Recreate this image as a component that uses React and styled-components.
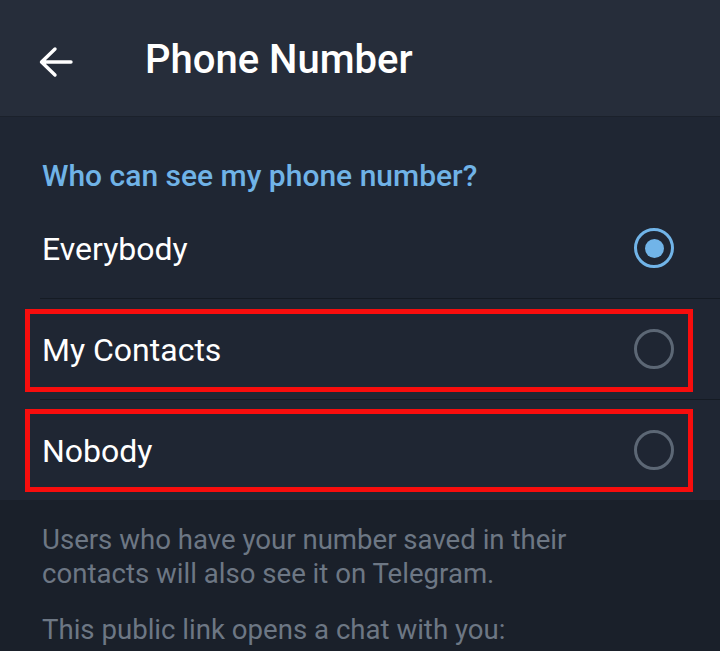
import React from "react";
import styled, { createGlobalStyle } from "styled-components";

const Global = createGlobalStyle`
  html, body { margin: 0; padding: 0; background: #1a202a; }
  body { font-family: Roboto, "Liberation Sans", sans-serif; -webkit-font-smoothing: antialiased; }
`;

const Page = styled.div`
  width: 720px;
  height: 651px;
  overflow: hidden;
  background: #1a202a;
`;

const Header = styled.header`
  height: 108px;
  padding-top: 8px;
  display: flex;
  align-items: center;
  background: #262d3a;
  border-bottom: 1px solid #1b212b;
  padding-left: 39px;
  box-sizing: content-box;
`;

const BackButton = styled.div`
  width: 34px;
  height: 32px;
  display: flex;
  align-items: center;
  margin-right: 72px;
`;

const Title = styled.h1`
  margin: 0;
  font-size: 40px;
  font-weight: 500;
  color: #ffffff;
  line-height: 1;
  transform: translateY(-2px);
`;

const Section = styled.section`
  background: #1f2633;
`;

const SectionTitle = styled.div`
  height: 81px;
  padding-left: 42px;
  box-sizing: border-box;
  font-size: 30px;
  font-weight: 500;
  color: #70b3e7;
  line-height: 1;
  padding-top: 44px;
`;

const Row = styled.div`
  position: relative;
  height: 100px;
  display: flex;
  align-items: center;
  justify-content: space-between;
  padding: 0 46px 0 42px;
  box-sizing: border-box;
`;

const Label = styled.span`
  font-size: 32px;
  color: #ffffff;
  line-height: 1;
  transform: translateY(1px);
`;

const Divider = styled.div`
  height: 1px;
  margin-left: 40px;
  background: #151b24;
`;

const Radio = styled.div`
  width: 40px;
  height: 40px;
  border-radius: 50%;
  box-sizing: border-box;
  border: 3px solid ${(p) => (p.$checked ? "#71b4e8" : "#5c6775")};
  display: flex;
  align-items: center;
  justify-content: center;
  &::after {
    content: "";
    display: ${(p) => (p.$checked ? "block" : "none")};
    width: 19px;
    height: 19px;
    border-radius: 50%;
    background: #71b4e8;
  }
`;

const Highlight = styled.div`
  position: absolute;
  left: 25px;
  right: 27px;
  top: ${(p) => p.$top}px;
  bottom: ${(p) => p.$bottom}px;
  border: 5px solid #f70d0d;
  pointer-events: none;
`;

const Footer = styled.div`
  padding: 23px 20px 0 42px;
`;

const Note = styled.p`
  margin: 0 0 22px;
  font-size: 27.6px;
  line-height: 34px;
  color: #6d7784;
  white-space: nowrap;
`;

const options = [
  { label: "Everybody", checked: true },
  { label: "My Contacts", highlight: { top: 10, bottom: 7 } },
  { label: "Nobody", highlight: { top: 9, bottom: 8 } },
];

export default function App() {
  return (
    <Page>
      <Global />
      <Header>
        <BackButton>
          <svg width="34" height="32" viewBox="0 0 34 32" fill="none">
            <path
              d="M32 16H3.5M16 3L2.5 16L16 29"
              stroke="#ffffff"
              strokeWidth="3.4"
              strokeLinecap="round"
              strokeLinejoin="round"
            />
          </svg>
        </BackButton>
        <Title>Phone Number</Title>
      </Header>
      <Section>
        <SectionTitle>Who can see my phone number?</SectionTitle>
        {options.map((o, i) => (
          <React.Fragment key={o.label}>
            {i > 0 && <Divider />}
            <Row>
              <Label>{o.label}</Label>
              <Radio $checked={o.checked} />
              {o.highlight && (
                <Highlight $top={o.highlight.top} $bottom={o.highlight.bottom} />
              )}
            </Row>
          </React.Fragment>
        ))}
      </Section>
      <Footer>
        <Note>
          Users who have your number saved in their
          <br />
          contacts will also see it on Telegram.
        </Note>
        <Note>This public link opens a chat with you:</Note>
      </Footer>
    </Page>
  );
}
